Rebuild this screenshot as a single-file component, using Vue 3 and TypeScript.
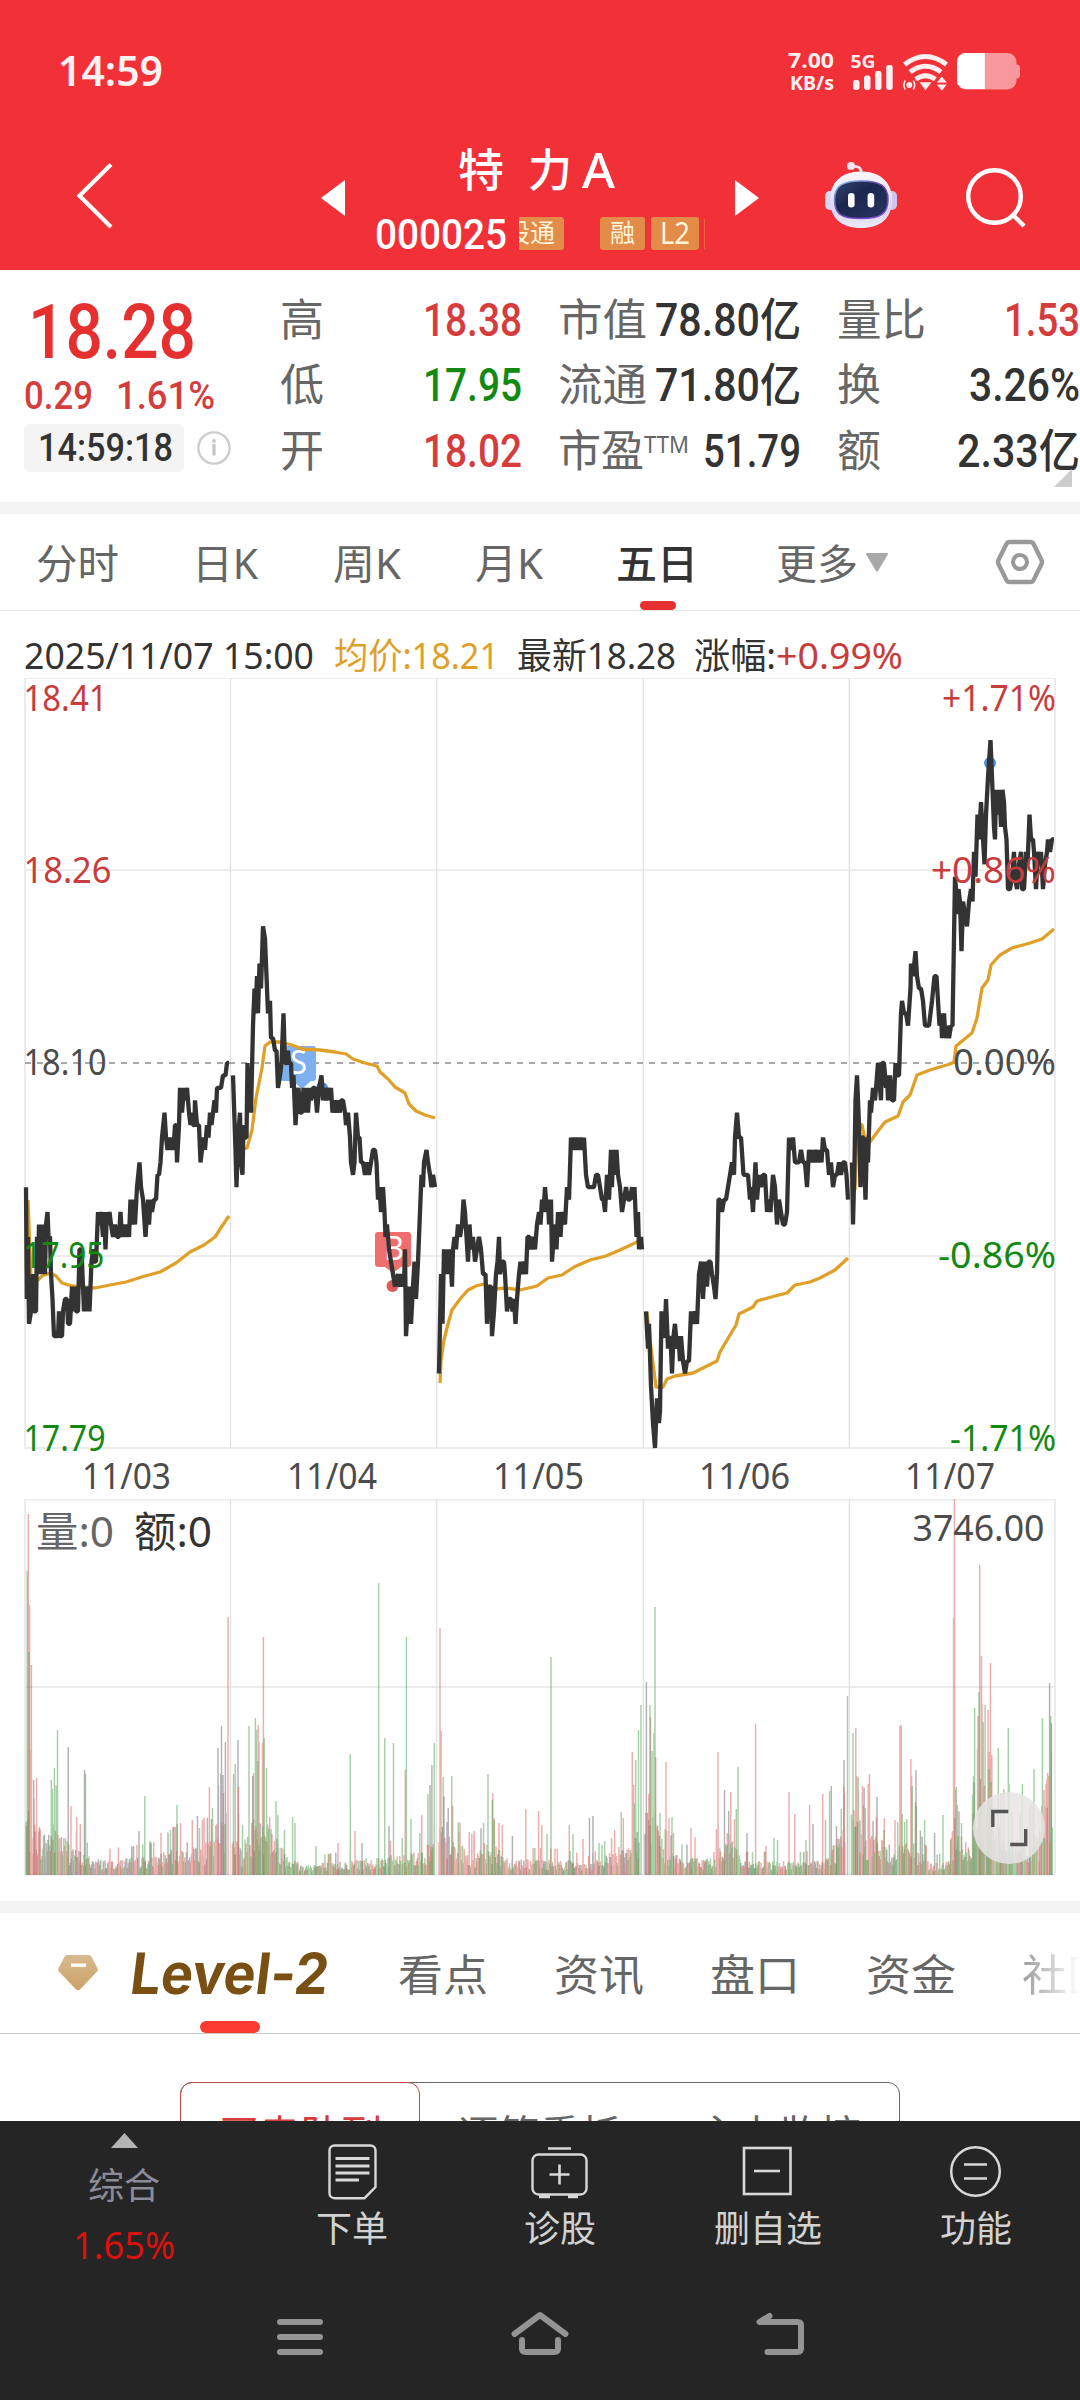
<script setup lang="ts">
import { h } from 'vue'

interface LabelProps {
  t: string
  w: number
  s: number
}

// One line of text set to an exact advance width; the bottom edge of its box is the baseline.
const Label = (p: LabelProps) =>
  h('svg', { class: 'label', width: p.w, height: p.s, style: 'display:block;overflow:visible;flex:none' }, [
    h(
      'text',
      { x: 0, y: p.s, 'font-size': p.s, fill: 'currentColor', textLength: p.w, lengthAdjust: 'spacingAndGlyphs', style: 'white-space:pre' },
      p.t,
    ),
  ])
Label.props = ['t', 'w', 's']

interface Stat {
  k: string
  kw: number
  v: string
  vw: number
  tone: string
  sup?: string
}
const stats: Stat[][] = [
  [
    { k: '高', kw: 44, v: '18.38', vw: 99, tone: 'up' },
    { k: '低', kw: 44, v: '17.95', vw: 99, tone: 'down' },
    { k: '开', kw: 44, v: '18.02', vw: 99, tone: 'up' },
  ],
  [
    { k: '市值', kw: 89, v: '78.80亿', vw: 146, tone: 'flat' },
    { k: '流通', kw: 89, v: '71.80亿', vw: 146, tone: 'flat' },
    { k: '市盈', kw: 86, v: '51.79', vw: 98, tone: 'flat', sup: 'TTM' },
  ],
  [
    { k: '量比', kw: 89, v: '1.53', vw: 76, tone: 'up' },
    { k: '换', kw: 44, v: '3.26%', vw: 111, tone: 'flat' },
    { k: '额', kw: 44, v: '2.33亿', vw: 123, tone: 'flat' },
  ],
]

const dayEdges = [230.5, 436.7, 643.3, 849.3]

const BASE = 1063
const TICK = 12.42

// Flat list of x, offset from 18.10 in cents
const sessions: number[][] = [
  [26, -10, 26.8, -19, 28, -14, 29, -21, 31, -20, 33, -17, 34, -20, 36, -20, 37, -14, 38, -17, 39, -13, 41, -17, 41.5, -13, 43, -16, 43.5, -13, 45, -17, 46, -13, 47.5, -12, 48.5, -14, 50, -14, 51, -17, 52.5, -19, 54, -22, 58, -22, 59, -20, 60, -22, 62, -22, 63, -20, 65, -19, 67, -19, 68, -21, 70, -21, 72, -18, 73.5, -20, 75, -18, 76, -20, 78, -20, 79.5, -15, 80.5, -15, 82, -16, 84, -20, 85, -18, 86.5, -20, 88, -18, 89.5, -20, 91.5, -16, 93, -15, 94, -16, 96, -16, 98, -12, 100, -13, 101, -12, 103, -14, 104, -12, 105.5, -15, 107, -12, 108.5, -13, 109.5, -12, 111, -13, 113, -14, 115, -13, 117, -14, 119, -14, 120.5, -12, 122, -14, 124, -13, 125.5, -14, 127, -13, 129, -14, 130.5, -11, 132, -13, 133, -11, 135, -13, 137, -10, 139.5, -8, 141, -10, 143, -11, 145.5, -14, 147, -12, 148, -11, 149, -13, 150.5, -11, 152, -12, 154, -11, 156, -11, 157.5, -9, 159, -9, 160.5, -8, 162, -6, 164.5, -4, 166, -6, 167.5, -7, 169, -6, 170.5, -7, 172, -6, 173.5, -7, 175, -5, 176, -5, 177, -8, 179, -5, 180, -2, 182, -4, 184, -2, 185, -3, 187, -2, 189, -4, 190.5, -5, 192, -4, 193, -5, 194.5, -5, 195, -3, 197, -5, 199, -5, 200.5, -8, 202, -7, 203.5, -6, 205, -7, 207, -5, 208.5, -6, 210, -4, 211.5, -5, 213, -4, 214.5, -3, 216, -4, 217, -2, 219, -2, 221, -2, 223, -1, 225.5, -1, 227, 0, 229, 0],
  [233, -1, 235.5, -7, 236.5, -10, 238, -6, 240, -4, 241, -8, 242.5, -9, 243.5, -5, 245, -6, 246.5, -6, 247.5, 0, 249, -4, 250.5, -1, 251, -4, 253, 3, 254.5, 6, 255.5, 4, 257, 7, 258, 4, 259.5, 8, 261, 6, 263, 11, 265, 10, 266.5, 7, 268, 4, 270, 5, 271, 2, 273, 2, 275, 1, 276.5, 1, 278, -2, 280, -1, 281.5, 0, 283.5, 4, 285, 0, 286.5, 0, 288, 1, 289, 0, 291, 0, 292, -2, 293.5, -1, 295.5, -5, 297, -3, 298.5, -2, 300, -4, 302, -4, 303.5, -2, 305, -4, 306.5, -2, 308, -4, 309.5, -2, 311, -3, 313, -2, 315, -2, 317, -4, 319, -2, 321.5, -1, 323, -3, 324, -2, 326, -3, 328, -2, 329.5, -3, 331, -2, 332.5, -4, 335, -3, 336.5, -4, 338, -3, 340, -4, 341, -3, 343, -3, 345, -4, 346, -5, 348, -4, 350, -6, 351, -8, 353, -9, 354.5, -8, 356, -4, 358, -6, 359.5, -6, 361, -8, 363, -8, 365, -9, 367, -8, 369, -9, 371, -8, 373, -7, 375, -7, 376.5, -8, 378, -11, 379.5, -10, 381, -12, 383, -10, 384.5, -12, 385.5, -14, 387, -13, 389, -15, 391, -16, 393, -17, 395, -18, 398, -17, 400, -18, 402, -17, 404, -18, 405, -15, 406, -22, 408, -19, 409.5, -18, 411, -21, 413, -18, 414.5, -16, 416, -19, 418, -16, 420, -12, 421.5, -9, 423, -10, 424, -8, 426.5, -7, 428, -8, 430, -9, 431.5, -10, 433, -9, 435, -10],
  [439, -25, 440, -21, 441, -17, 442.5, -21, 444, -15, 446, -17, 447, -15, 449, -17, 450, -15, 452, -18, 453, -15, 454.5, -14, 456, -15, 458, -13, 460, -14, 462, -13, 463.5, -11, 465, -12, 466.5, -14, 468, -16, 469.5, -13, 471, -15, 473, -14, 475, -16, 477, -15, 479, -14, 481, -15, 483, -17, 485.5, -17, 487, -21, 489, -18, 491, -18, 492, -22, 494, -20, 496, -17, 497.5, -16, 499, -14, 500, -17, 502, -16, 504, -16, 505, -17, 507, -20, 509, -19, 511, -19, 512.5, -20, 514, -19, 515.5, -21, 517, -19, 519, -17, 520.5, -16, 522, -17, 524, -16, 526, -17, 527.5, -14, 529.5, -14, 531, -15, 533, -14, 535, -15, 537, -13, 539, -12, 540.5, -13, 542, -11, 543.5, -12, 545, -10, 547, -12, 548, -11, 549, -13, 551, -11, 552, -16, 554.5, -13, 556.5, -15, 558, -12, 560.5, -14, 562, -12, 565, -13, 567, -10, 569, -11, 571, -6, 573, -7, 574, -6, 576, -7, 577, -6, 579, -7, 580.5, -6, 582, -7, 584, -6, 586, -9, 588, -10, 590, -10, 592, -10, 594, -10, 596, -9, 598, -9, 600, -10, 602, -11, 603.5, -11, 605, -12, 607, -9, 609, -11, 611, -7, 612, -10, 613, -7, 614, -9, 616.5, -7, 618, -9, 620, -10, 622, -12, 624, -11, 626, -10, 628, -11, 630, -11, 632, -10, 633.5, -11, 634.5, -10, 636.5, -14, 638, -12, 639, -15, 641, -14, 642, -15],
  [646, -20, 648, -23, 649, -21, 651, -26, 653, -29, 655, -31, 657, -27, 659, -29, 660, -28, 661.5, -20, 663, -22, 664.5, -22, 666, -19, 668, -23, 669, -22, 671, -23, 672, -25, 673.5, -22, 675, -21, 677, -23, 678.5, -22, 680, -24, 681, -22, 683, -24, 685, -25, 687, -24, 689, -24, 691, -20, 693, -21, 695, -20, 697, -21, 699, -17, 701, -16, 703, -19, 705, -16, 707, -18, 708.5, -16, 710.5, -16, 712, -17, 714, -18, 715.5, -19, 717, -17, 718.5, -11, 720, -11, 722, -12, 724, -11, 726, -11, 728, -10, 730, -9, 732, -8, 734, -9, 735, -6, 737, -4, 739, -6, 741, -6, 743.5, -9, 746, -9, 748, -9, 750, -11, 751, -10, 753, -12, 755.5, -8, 757, -11, 759, -9, 761, -10, 763, -9, 765, -9, 767, -12, 769, -11, 770.5, -12, 773, -9, 775, -10, 777, -13, 779, -11, 781, -12, 783, -13, 785, -13, 787, -12, 789, -6, 791, -7, 793, -6, 795, -8, 797, -8, 799, -8, 801, -7, 803, -8, 805, -8, 807, -10, 809, -7, 811, -8, 812, -7, 814, -8, 816, -7, 818, -8, 820, -7, 821.5, -8, 823, -6, 825, -7, 827, -7, 829, -9, 831, -8, 833, -10, 835, -9, 837, -9, 839, -8, 841, -9, 843, -8, 845, -8, 846.5, -9, 848, -11],
  [852, -8, 853, -13, 854.5, -8, 855.5, -3, 857, -1, 859, -5, 860.5, -10, 862, -6, 863.5, -6, 865.5, -11, 867, -6, 868, -8, 870, -3, 871, -4, 873, -2, 875, -3, 877, -1, 878, 0, 880, -2, 881, -3, 882, 0, 884, 0, 886, -2, 887, -1, 888, -3, 890, -1, 892, -3, 894, -3, 895.5, 0, 897, -1, 899, -1, 901, 4, 902, 5, 904, 4, 906, 4, 908, 3, 910.5, 6, 911, 8, 913, 7, 915.5, 9, 917, 7, 919, 6, 921, 6, 923, 5, 925, 3, 927, 3, 929, 3, 930.5, 4, 932, 5, 934.5, 7, 936.5, 7, 938, 5, 939.5, 3, 941, 4, 942, 2, 944, 4, 945.5, 2, 947, 3, 949, 2, 951, 3, 952.5, 3, 954, 10, 955, 15, 956, 14, 957.5, 12, 958.5, 14, 960, 13, 961.5, 9, 963, 13, 965, 12, 967, 11, 969, 13, 971, 14, 972.5, 13, 974, 17, 975.5, 15, 977.5, 20, 979, 18, 981, 21, 983, 18, 984.5, 16, 986, 20, 988, 23, 990.5, 26, 992, 23, 994, 19, 995, 18, 996, 22, 998, 20, 999.5, 22, 1001, 19, 1002.5, 22, 1004, 21, 1005, 19, 1006.5, 18, 1008, 14, 1010, 14, 1012, 15, 1014, 17, 1015, 15, 1017, 14, 1019, 16, 1021, 17, 1022, 14, 1024, 14, 1026, 17, 1027.5, 16, 1029.5, 20, 1031, 18, 1033, 18, 1034, 17, 1036, 14, 1038, 17, 1040, 16, 1041, 17, 1043, 14, 1045, 16, 1047, 17, 1048, 18, 1050, 17, 1052, 18, 1054, 18],
]
const pricePaths = sessions.map((s) => {
  const pts: string[] = []
  for (let i = 0; i < s.length; i += 2) pts.push(`${s[i]},${(BASE - s[i + 1] * TICK).toFixed(1)}`)
  return pts.join(' ')
})

const averages: string[] = [
  '28,1200 31,1279 38,1280 42,1276 50,1273 56,1276 62,1283 72,1286 83,1287 95,1288 110,1285 126,1282 145,1276 160,1272 176,1263 190,1252 204,1245 215,1237 222,1226 229,1216',
  '238,1130 240,1150 247,1148 252,1130 256,1098 262,1068 265,1046 270,1042 280,1042 292,1045 302,1049 320,1050 335,1052 346,1054 353,1059 365,1063 377,1066 380,1072 388,1079 395,1087 405,1093 409,1104 416,1111 425,1115 435,1118',
  '440,1383 441,1360 444,1340 448,1324 452,1310 460,1299 468,1290 476,1286 484,1284 495,1289 506,1288 520,1290 537,1286 548,1278 562,1275 574,1267 590,1260 606,1256 620,1250 635,1243 641,1239',
  '647,1312 650,1340 656,1387 663,1387 667,1379 675,1376 693,1373 705,1367 717,1361 720,1352 730,1335 736,1325 739,1314 753,1307 757,1301 775,1296 787,1293 795,1285 810,1282 820,1278 835,1270 848,1258',
  '855,1190 857,1125 862,1125 864,1135 870,1142 875,1135 885,1122 898,1116 903,1102 910,1095 917,1075 930,1070 950,1064 954,1062 956,1046 972,1033 977,1018 982,988 988,980 991,965 1000,955 1012,948 1030,943 1042,939 1054,929',
]

interface Mark {
  t: string
  x: number
  y: number
  w: number
  c: string
}
const marks: Mark[] = [
  { t: '18.41', x: 23.5, y: 710.5, w: 84, c: '#c83c3c' },
  { t: '18.26', x: 23.5, y: 882.5, w: 88, c: '#c83c3c' },
  { t: '18.10', x: 23.5, y: 1075, w: 83, c: '#4c4c4c' },
  { t: '17.95', x: 23.5, y: 1268, w: 81, c: '#128a12' },
  { t: '17.79', x: 23.5, y: 1451, w: 82, c: '#128a12' },
  { t: '+1.71%', x: 942, y: 710.5, w: 114, c: '#c83c3c' },
  { t: '+0.86%', x: 931, y: 882.5, w: 125, c: '#c83c3c' },
  { t: '0.00%', x: 953, y: 1075, w: 103, c: '#4c4c4c' },
  { t: '-0.86%', x: 938, y: 1268, w: 118, c: '#128a12' },
  { t: '-1.71%', x: 950, y: 1451, w: 106, c: '#128a12' },
  { t: '11/03', x: 82, y: 1488.5, w: 89, c: '#4c4c4c' },
  { t: '11/04', x: 287, y: 1488.5, w: 90, c: '#4c4c4c' },
  { t: '11/05', x: 493, y: 1488.5, w: 91, c: '#4c4c4c' },
  { t: '11/06', x: 699, y: 1488.5, w: 91, c: '#4c4c4c' },
  { t: '11/07', x: 905, y: 1488.5, w: 90, c: '#4c4c4c' },
]

// Volume: notable minutes as x, top edge, direction
type Spike = [number, number, string]
const spikes: Spike[] = [
  [27.2, 1571, 'g'], [28.3, 1514, 'r'], [29.6, 1605, 'r'], [29, 1652, 'g'], [31.4, 1665, 'r'], [30.4, 1750, 'r'], [36.5, 1778, 'r'], [34, 1799, 'n'], [51.3, 1780, 'g'], [52.4, 1789, 'g'], [54.4, 1768, 'g'], [57.5, 1730, 'g'], [68.2, 1747, 'n'], [71, 1806, 'r'], [76.8, 1817, 'r'], [80.3, 1824, 'r'], [84.5, 1770, 'n'], [85.5, 1774, 'g'], [139, 1831, 'n'], [144.8, 1796, 'g'], [150, 1841, 'g'], [161, 1833, 'r'], [170.5, 1830, 'g'], [175.3, 1827, 'r'], [176.9, 1805, 'g'], [180.5, 1823, 'r'], [197.5, 1816, 'n'], [199.5, 1828, 'g'], [209.4, 1787, 'r'], [211.5, 1819, 'n'], [218, 1748, 'n'], [220.8, 1774, 'n'], [221.5, 1726, 'n'], [223, 1775, 'n'], [225.4, 1742, 'n'], [223.5, 1793, 'r'], [228, 1617, 'r'],
  [233.5, 1774, 'g'], [235.3, 1764, 'g'], [238, 1740, 'n'], [238.5, 1787, 'r'], [242.5, 1825, 'g'], [249, 1726, 'g'], [253.5, 1773, 'r'], [255.4, 1718, 'g'], [256.5, 1730, 'g'], [258.2, 1725, 'r'], [259, 1742, 'r'], [263.4, 1637, 'r'], [262.5, 1743, 'r'], [264.2, 1738, 'g'], [266.5, 1768, 'g'], [269.7, 1817, 'r'], [276, 1801, 'g'], [284.5, 1830, 'g'], [292.6, 1817, 'g'], [295, 1823, 'g'], [316, 1846, 'g'], [338, 1843, 'r'], [350.3, 1754, 'g'], [355, 1831, 'r'], [362, 1843, 'n'], [378.7, 1583, 'g'], [384.7, 1738, 'g'], [389, 1826, 'n'], [393.5, 1743, 'g'], [405.2, 1770, 'r'], [406.4, 1637, 'g'], [411, 1819, 'g'], [421.7, 1815, 'r'], [428, 1794, 'g'], [430, 1785, 'n'], [431.9, 1765, 'n'], [434.3, 1743, 'g'],
  [440, 1628, 'r'], [441, 1731, 'r'], [443.2, 1777, 'g'], [451.8, 1776, 'g'], [452.6, 1806, 'r'], [447, 1822, 'n'], [459.3, 1832, 'r'], [474, 1831, 'r'], [488, 1774, 'g'], [492.8, 1793, 'r'], [492.3, 1800, 'g'], [494, 1818, 'r'], [499, 1823, 'r'], [502.3, 1825, 'r'], [512.4, 1836, 'n'], [525.8, 1809, 'r'], [538.6, 1811, 'r'], [541.7, 1825, 'r'], [551, 1657, 'g'], [547, 1834, 'g'], [569.3, 1825, 'r'], [573, 1834, 'g'], [583, 1839, 'r'], [589.5, 1818, 'n'], [593, 1816, 'n'], [599, 1843, 'g'], [604.7, 1841, 'g'], [611.6, 1838, 'r'], [621.2, 1812, 'g'], [623.3, 1818, 'r'], [632.3, 1752, 'r'], [633.6, 1785, 'r'], [635.7, 1760, 'g'], [638.5, 1730, 'g'], [641, 1705, 'g'],
  [646.4, 1682, 'n'], [650, 1705, 'g'], [650.5, 1717, 'r'], [648.8, 1794, 'r'], [652, 1751, 'g'], [654, 1733, 'g'], [655, 1607, 'g'], [655.7, 1757, 'r'], [660, 1813, 'g'], [666, 1762, 'r'], [669, 1818, 'r'], [672, 1817, 'g'], [673.5, 1833, 'r'], [691, 1828, 'r'], [695, 1837, 'r'], [718, 1752, 'r'], [724.5, 1790, 'n'], [728.7, 1811, 'n'], [730.8, 1792, 'r'], [734.5, 1819, 'r'], [736.3, 1809, 'g'], [738, 1767, 'g'], [747, 1833, 'n'], [755.6, 1724, 'r'], [766, 1846, 'r'], [774, 1838, 'g'], [777.6, 1840, 'g'], [789, 1792, 'r'], [794.8, 1814, 'r'], [809.6, 1805, 'r'], [813, 1824, 'n'], [806, 1840, 'g'], [822.7, 1794, 'r'], [825.5, 1820, 'g'], [829.6, 1791, 'g'], [831.3, 1786, 'n'], [841.3, 1809, 'g'], [843.7, 1787, 'r'], [844, 1760, 'n'], [847.5, 1696, 'g'], [836.5, 1826, 'n'],
  [853, 1733, 'g'], [855.8, 1728, 'r'], [856.8, 1776, 'r'], [858.5, 1790, 'g'], [862.3, 1792, 'r'], [863.3, 1805, 'r'], [865.4, 1808, 'g'], [868.2, 1784, 'r'], [869.5, 1774, 'r'], [873, 1821, 'n'], [877, 1797, 'n'], [876.4, 1817, 'r'], [884, 1830, 'g'], [895, 1820, 'r'], [899.9, 1726, 'r'], [901.2, 1725, 'r'], [902.3, 1814, 'g'], [904.7, 1822, 'g'], [910.9, 1759, 'r'], [911.6, 1776, 'r'], [912.2, 1786, 'g'], [916, 1770, 'n'], [915.4, 1802, 'r'], [916.4, 1806, 'g'], [924.6, 1820, 'g'], [934.6, 1833, 'n'], [943, 1815, 'g'], [951, 1838, 'r'], [953.6, 1618, 'r'], [954.4, 1499, 'r'], [955.3, 1790, 'r'], [956.3, 1787, 'g'], [957.4, 1805, 'r'], [961.5, 1823, 'g'], [973, 1813, 'r'], [974.6, 1708, 'g'], [973.5, 1776, 'g'], [978, 1716, 'r'], [979, 1692, 'g'], [979.7, 1565, 'r'], [981.5, 1656, 'r'], [980.4, 1779, 'n'], [982, 1704, 'r'], [983.2, 1722, 'g'], [988, 1710, 'r'], [989.4, 1752, 'r'], [990.4, 1663, 'r'], [989, 1769, 'g'], [991, 1782, 'g'], [998.3, 1748, 'g'], [1001, 1793, 'r'], [1003.8, 1789, 'g'], [1008.3, 1728, 'g'], [1009, 1784, 'g'], [1022.4, 1784, 'g'], [1030, 1806, 'r'], [1034, 1769, 'g'], [1042.4, 1718, 'g'], [1041.7, 1806, 'g'], [1044, 1790, 'r'], [1046, 1784, 'r'], [1047, 1779, 'r'], [1047.6, 1773, 'r'], [1048.6, 1776, 'r'], [1049.6, 1683, 'n'], [1050.7, 1716, 'g'], [1051.3, 1753, 'g'],
]

// Typical bar height along each day, as x, height; the dominant tone follows
const envelopes: { pts: number[]; mix: string }[] = [
  { pts: [26, 60, 34, 50, 45, 35, 55, 50, 62, 35, 80, 20, 100, 13, 130, 15, 160, 18, 180, 28, 210, 30, 226, 65], mix: 'rgnrn' },
  { pts: [232.5, 50, 242, 22, 256, 62, 265, 55, 280, 28, 300, 9, 340, 12, 380, 16, 420, 22, 434, 30], mix: 'rggnr' },
  { pts: [439, 50, 450, 32, 475, 20, 490, 32, 510, 14, 560, 14, 590, 10, 610, 20, 639, 40], mix: 'rgrnr' },
  { pts: [645, 65, 655, 60, 664, 25, 680, 16, 710, 14, 728, 42, 742, 12, 790, 12, 825, 13, 845, 45], mix: 'rgnrg' },
  { pts: [851.5, 60, 870, 38, 890, 26, 915, 30, 930, 10, 948, 12, 957, 35, 970, 30, 984, 95, 995, 50, 1015, 30, 1040, 40, 1053, 85], mix: 'rgrng' },
]
let seed = 7
const rnd = () => {
  seed = (seed * 1103515245 + 12345) % 2147483648
  return seed / 2147483648
}
const minuteBars: Spike[] = []
for (const { pts, mix } of envelopes) {
  let k = 0
  for (let x = pts[0]; x <= pts[pts.length - 2]; x += 0.84) {
    while (k < pts.length - 4 && x > pts[k + 2]) k += 2
    const f = (x - pts[k]) / (pts[k + 2] - pts[k])
    const env = pts[k + 1] + (pts[k + 3] - pts[k + 1]) * f
    const r = rnd()
    const height = Math.max(2, env * (0.35 + r * 0.9 + (r > 0.9 ? 0.7 : 0)))
    minuteBars.push([x, 1875 - height, mix[Math.floor(rnd() * mix.length)]])
  }
}
const bars = [...minuteBars, ...spikes]
const barPath = (tone: string) =>
  bars
    .filter((b) => b[2] === tone)
    .map((b) => `M${b[0].toFixed(1)} 1875V${b[1].toFixed(1)}`)
    .join('')
const volume = [
  { d: barPath('n'), c: '#6f6a72' },
  { d: barPath('r'), c: '#dd625e' },
  { d: barPath('g'), c: '#55a552' },
]

const periods = [
  { t: '分时', w: 83 },
  { t: '日K', w: 66 },
  { t: '周K', w: 68 },
  { t: '月K', w: 68 },
]
</script>

<template>
  <div class="screen">
    <header class="top">
      <div class="status">
        <div class="clock"><Label t="14:59" :w="105" :s="42" /></div>
        <div class="speed">
          <Label t="7.00" :w="46" :s="21" />
          <Label t="KB/s" :w="44" :s="20" />
        </div>
        <svg class="signals" width="180" height="44" viewBox="845 50 180 44">
          <text x="850.5" y="68" font-size="18" font-weight="700" fill="#fff" fill-opacity=".93" textLength="25" lengthAdjust="spacingAndGlyphs">5G</text>
          <g fill="#fff" fill-opacity=".93">
            <rect x="853" y="80" width="6.5" height="10" rx="2.4" />
            <rect x="864" y="75.5" width="6.5" height="14.5" rx="2.4" />
            <rect x="875" y="71" width="6.5" height="19" rx="2.4" />
            <rect x="886.2" y="65" width="6.5" height="25" rx="2.4" />
            <path d="M919.5 82.2h12l-6 8z" />
            <path d="M936.8 82.6h10l-5-6.2zM936.8 84.6h10l-5 6.2z" />
            <circle cx="909.3" cy="85" r="2.9" />
          </g>
          <g fill="none" stroke="#fff" stroke-opacity=".93">
            <g stroke-width="4.9">
              <path d="M904.5 64.5Q925.5 48.5 946.5 64.5" />
              <path d="M910 72Q925.5 60.5 941 72" />
              <path d="M915.7 79.2Q925.5 72.5 935.3 79.2" />
            </g>
            <path stroke-width="1.6" d="M905.3 80.5Q902.5 85 905.3 89.5M913.3 80.5Q916.1 85 913.3 89.5" />
          </g>
          <path d="M965.5 53h42a9 9 0 0 1 9 9v2.5a3.5 3.5 0 0 1 3.5 3.5v7a3.5 3.5 0 0 1-3.5 3.5v2a9 9 0 0 1-9 9h-42a8.5 8.5 0 0 1-8.5-8.5v-19.5a8.5 8.5 0 0 1 8.5-8.5z" fill="#f9989c" />
          <path d="M984.8 53h-19.3a8.5 8.5 0 0 0-8.5 8.5v19a8.5 8.5 0 0 0 8.5 8.5h19.3z" fill="#fff" />
        </svg>
      </div>
      <div class="titlebar">
        <svg class="back" width="40" height="70" viewBox="75 160 40 70">
          <path d="M111 164.5L79.5 195.8 111 227" fill="none" stroke="#fff" stroke-width="4.2" />
        </svg>
        <svg class="prev" width="24" height="36" viewBox="0 0 24 36"><path d="M24 0v36L0 18z" fill="#fff" /></svg>
        <div class="stock">
          <div class="name">
            <Label t="特" :w="46" :s="45" />
            <Label t="力" :w="44" :s="45" />
            <Label t="A" :w="33" :s="49" />
          </div>
          <div class="codeline">
            <div class="code"><Label t="000025" :w="132" :s="42" /></div>
            <div class="tags">
              <span class="tag cut"><Label t="股通" :w="50" :s="25" /></span>
              <span class="tag rong"><Label t="融" :w="25" :s="25" /></span>
              <span class="tag l2"><Label t="L2" :w="30" :s="30" /></span>
              <span class="sliver"></span>
            </div>
          </div>
        </div>
        <svg class="next" width="24" height="36" viewBox="0 0 24 36"><path d="M0 0v36l24-18z" fill="#fff" /></svg>
        <svg class="robot" width="74" height="70" viewBox="824 160 74 70">
          <defs>
            <linearGradient id="shell" x1="0" y1="0" x2="0" y2="1">
              <stop offset="0" stop-color="#fdf8fb" />
              <stop offset=".7" stop-color="#dcd6f0" />
              <stop offset="1" stop-color="#eceaf8" />
            </linearGradient>
            <linearGradient id="rim" x1="0" y1="0" x2="1" y2="1">
              <stop offset="0" stop-color="#7fd4ee" />
              <stop offset=".5" stop-color="#6a3fb0" />
              <stop offset="1" stop-color="#8a52e8" />
            </linearGradient>
            <linearGradient id="glass" x1="0" y1="0" x2="1" y2="1">
              <stop offset="0" stop-color="#35436a" />
              <stop offset=".4" stop-color="#1c2750" />
              <stop offset="1" stop-color="#2a3560" />
            </linearGradient>
          </defs>
          <rect x="825" y="191" width="12" height="19" rx="5" fill="#d9d6ee" />
          <rect x="885" y="191" width="12" height="19" rx="5" fill="#cfc5ec" />
          <path d="M852 166.5Q861.5 165 861.5 174" fill="none" stroke="#f6dfe8" stroke-width="2.8" />
          <circle cx="851" cy="166" r="4" fill="#f1e4f0" />
          <path d="M861 171.5C882 171.5 892 184 892 199.5 892 219 880 228 861 228S830 219 830 199.5C830 184 840 171.5 861 171.5z" fill="url(#shell)" />
          <path d="M861 181C880 181 888 186 888 199.5 888 213 882 218.5 861 218.5S834.5 213 834.5 199.5C834.5 186 842 181 861 181z" fill="url(#glass)" stroke="url(#rim)" stroke-width="1.5" />
          <rect x="848" y="193" width="6.6" height="14.5" rx="3.3" fill="#fff" />
          <rect x="867.6" y="193" width="6.6" height="14.5" rx="3.3" fill="#fff" />
        </svg>
        <svg class="search" width="64" height="64" viewBox="964 165 64 64">
          <circle cx="994.5" cy="196.5" r="26.3" fill="none" stroke="#fff" stroke-width="4.4" />
          <path d="M1013.5 215.5l10.5 10.5" stroke="#fff" stroke-width="4.4" />
        </svg>
      </div>
    </header>

    <section class="quote">
      <div class="last">
        <div class="price din"><Label t="18.28" :w="168" :s="76" /></div>
        <div class="delta din">
          <Label t="0.29" :w="69" :s="39" />
          <Label t="1.61%" :w="99" :s="39" />
        </div>
        <div class="stamp">
          <div class="pill din"><Label t="14:59:18" :w="135" :s="39" /></div>
          <svg width="36" height="36" viewBox="0 0 36 36">
            <circle cx="18" cy="18" r="15.6" fill="none" stroke="#ccc" stroke-width="2.4" />
            <path d="M16.3 15.5h1.7v10" fill="none" stroke="#c4c4c4" stroke-width="3.2" />
            <circle cx="18" cy="11" r="1.9" fill="#c4c4c4" />
          </svg>
        </div>
      </div>
      <div v-for="(col, i) in stats" :key="i" class="stats" :class="'c' + i">
        <div v-for="s in col" :key="s.k" class="stat">
          <Label :t="s.k" :w="s.kw" :s="44" />
          <span v-if="s.sup" class="sup"><Label :t="s.sup" :w="45" :s="23" /></span>
          <span class="v din" :class="s.tone"><Label :t="s.v" :w="s.vw" :s="46" /></span>
        </div>
      </div>
      <svg class="corner" width="18" height="18" viewBox="0 0 18 18"><path d="M18 0v18H0z" fill="#ccc" /></svg>
    </section>

    <nav class="periods">
      <div v-for="p in periods" :key="p.t" class="period"><Label :t="p.t" :w="p.w" :s="41" /></div>
      <div class="period on"><Label t="五日" :w="82" :s="41" /></div>
      <div class="period more">
        <Label t="更多" :w="82" :s="41" />
        <svg width="22" height="19" viewBox="0 0 22 19"><path d="M1 0h20a1 1 0 0 1 .8 1.5L12 18a1.2 1.2 0 0 1-2 0L.2 1.5A1 1 0 0 1 1 0z" fill="#a8a8a8" /></svg>
      </div>
      <svg class="gear" width="50" height="48" viewBox="995 538 50 48">
        <path d="M1009.5 542h21q2 0 3 1.8l8 16.2q1 2 0 4l-8 16.2q-1 1.8-3 1.8h-21q-2 0-3-1.8l-8-16.2q-1-2 0-4l8-16.2q1-1.8 3-1.8z" fill="none" stroke="#999" stroke-width="4.4" />
        <circle cx="1020" cy="562" r="7" fill="none" stroke="#999" stroke-width="4.2" />
      </svg>
    </nav>

    <section class="chart">
      <div class="legend">
        <Label t="2025/11/07 15:00" :w="290" :s="36" />
        <Label class="avg" t="均价:18.21" :w="165" :s="36" />
        <Label t="最新18.28" :w="159" :s="36" />
        <Label t="涨幅:" :w="82" :s="36" />
        <Label class="rise" t="+0.99%" :w="127" :s="36" />
      </div>
      <svg class="price-plot" width="1080" height="821" viewBox="0 678 1080 821">
        <g stroke="#ececec" stroke-width="2" fill="none">
          <rect x="25" y="678" width="1030" height="770" />
          <path d="M25 870H1055M25 1256H1055" />
        </g>
        <path v-for="x in dayEdges" :key="x" :d="`M${x} 678V1448`" stroke="#e0e0e0" stroke-width="1.2" />
        <path d="M25 1063H1055" stroke="#8c8c8c" stroke-width="1.6" stroke-dasharray="6 6" />
        <path d="M283 1046h30a3 3 0 0 1 3 3v29a3 3 0 0 1-3 3h-2l-9 8-9-8h-10a3 3 0 0 1-3-3v-29a3 3 0 0 1 3-3z" fill="#7db0ef" />
        <g fill="#5590d8">
          <circle cx="302.5" cy="1098" r="6" />
          <circle cx="322" cy="1088" r="6" />
          <circle cx="990" cy="763" r="6" />
        </g>
        <path d="M378 1232h30a3 3 0 0 1 3 3v29a3 3 0 0 1-3 3h-7l-8 6-8-6h-7a3 3 0 0 1-3-3v-29a3 3 0 0 1 3-3z" fill="#f06e6e" />
        <circle cx="392.5" cy="1286" r="6" fill="#dd5a5a" />
        <text x="290" y="1074" font-size="32" fill="#fff" textLength="17" lengthAdjust="spacingAndGlyphs">S</text>
        <text x="384" y="1260" font-size="32" fill="#fff" textLength="20" lengthAdjust="spacingAndGlyphs">B</text>
        <polyline v-for="(a, i) in averages" :key="'a' + i" :points="a" fill="none" stroke="#e0a028" stroke-width="3.3" stroke-linejoin="round" />
        <polyline v-for="(p, i) in pricePaths" :key="'p' + i" :points="p" fill="none" stroke="#333" stroke-width="4.3" stroke-linejoin="bevel" />
        <text v-for="m in marks" :key="m.t" :x="m.x" :y="m.y" :fill="m.c" font-size="36" :textLength="m.w" lengthAdjust="spacingAndGlyphs">{{ m.t }}</text>
      </svg>
      <div class="volume">
        <svg width="1080" height="402" viewBox="0 1499 1080 402">
          <g stroke="#ececec" stroke-width="2" fill="none">
            <rect x="25" y="1499.5" width="1030" height="375" />
            <path d="M25 1687H1055" />
          </g>
          <path v-for="x in dayEdges" :key="x" :d="`M${x} 1499V1875`" stroke="#e0e0e0" stroke-width="1.2" />
          <path v-for="v in volume" :key="v.c" :d="v.d" :stroke="v.c" stroke-width="1.45" stroke-opacity=".52" fill="none" />
          <text x="36" y="1546.5" font-size="42" fill="#666" textLength="78" lengthAdjust="spacingAndGlyphs">量:0</text>
          <text x="134" y="1546.5" font-size="42" fill="#333" textLength="78" lengthAdjust="spacingAndGlyphs">额:0</text>
          <text x="912.5" y="1540.5" font-size="36" fill="#4c4c4c" textLength="132" lengthAdjust="spacingAndGlyphs">3746.00</text>
        </svg>
        <svg class="expand" width="72" height="72" viewBox="973 1793 72 72">
          <circle cx="1009" cy="1829" r="36" fill="#e6e4e4" fill-opacity=".86" />
          <path d="M992.8 1828v-15.5h15.5M1025.7 1830v15.5h-15.5" fill="none" stroke="#555" stroke-width="3.4" />
        </svg>
      </div>
    </section>

    <nav class="sections">
      <svg class="gem" width="48" height="48" viewBox="54 1950 48 48">
        <defs>
          <linearGradient id="gold" x1="0" y1="0" x2="0" y2="1">
            <stop offset="0" stop-color="#d8ba90" />
            <stop offset="1" stop-color="#cba168" />
          </linearGradient>
        </defs>
        <path d="M67.5 1955h21q2 0 3 1.7l6 11.5q1 2-.6 3.6l-16.500 17.2q-2.400 2.400-4.800 0l-16.500-17.2q-1.600-1.600-.6-3.600l6-11.500q1-1.700 3-1.700z" fill="url(#gold)" />
        <rect x="71" y="1963.5" width="15" height="3.4" fill="#fff" />
      </svg>
      <div class="level"><Label t="Level-2" :w="198" :s="57" /></div>
      <Label t="看点" :w="90" :s="43.5" />
      <Label t="资讯" :w="90" :s="43.5" />
      <Label t="盘口" :w="90" :s="43.5" />
      <Label t="资金" :w="90" :s="43.5" />
      <div class="fade"><Label t="社区" :w="90" :s="43.5" /></div>
    </nav>

    <section class="queue">
      <div class="segmented">
        <div class="seg on"><Label t="买卖队列" :w="164" :s="40" /></div>
        <div class="seg"><Label t="逐笔委托" :w="164" :s="40" /></div>
        <div class="seg"><Label t="主力监控" :w="164" :s="40" /></div>
      </div>
    </section>

    <footer class="dock">
      <div class="actions">
        <div class="index">
          <svg width="27" height="15" viewBox="0 0 27 15"><path d="M13.5 0L27 15H0z" fill="#b4b4b4" /></svg>
          <Label t="综合" :w="72" :s="36" />
          <Label t="1.65%" :w="102" :s="39" />
        </div>
        <div class="action">
          <svg width="60" height="60" viewBox="322 2142 60 60" fill="none" stroke="#d8d8d8" stroke-width="2.4">
            <path d="M334.5 2145.5h36a5 5 0 0 1 5 5v36.5l-11 11.2h-30a5 5 0 0 1-5-5v-42.7a5 5 0 0 1 5-5z" />
            <path d="M335.5 2158.5h34M335.5 2166h34M335.5 2173h34M335.5 2180h23.5" stroke-width="2.8" />
          </svg>
          <Label t="下单" :w="72" :s="36" />
        </div>
        <div class="action">
          <svg width="60" height="60" viewBox="530 2142 60 60" fill="none" stroke="#d8d8d8" stroke-width="2.4">
            <rect x="532.5" y="2154.5" width="54" height="40" rx="6" />
            <path d="M548 2148.5h23M559.5 2164.5v20M549.5 2174.5h20" stroke-width="2.6" />
            <path d="M539 2196.5h11M568 2196.5h10" stroke-width="3.6" />
          </svg>
          <Label t="诊股" :w="72" :s="36" />
        </div>
        <div class="action">
          <svg width="60" height="60" viewBox="738 2142 60 60" fill="none" stroke="#d8d8d8" stroke-width="2.6">
            <rect x="744" y="2148" width="46.5" height="46" />
            <path d="M754 2171h26" />
          </svg>
          <Label t="删自选" :w="108" :s="36" />
        </div>
        <div class="action">
          <svg width="60" height="60" viewBox="946 2142 60 60" fill="none" stroke="#d8d8d8" stroke-width="2.5">
            <circle cx="975.5" cy="2171.5" r="24.3" />
            <path d="M964 2164.5h23M964 2178.5h23" />
          </svg>
          <Label t="功能" :w="72" :s="36" />
        </div>
      </div>
      <div class="system">
        <svg width="60" height="50" viewBox="270 2312 60 50"><path d="M280 2322h40M280 2337h40M280 2352h40" stroke="#949494" stroke-width="6" stroke-linecap="round" /></svg>
        <svg width="60" height="50" viewBox="510 2310 60 50">
          <path d="M514.5 2334L540 2315l25.5 19M522 2340v8.5q0 3.5 3.5 3.5h29q3.5 0 3.5-3.5v-8.5" fill="none" stroke="#949494" stroke-width="6" stroke-linecap="round" stroke-linejoin="round" />
        </svg>
        <svg width="60" height="50" viewBox="750 2310 60 50">
          <path d="M769.5 2316l-10 6h38q3.5 0 3.5 3.5v23q0 3.5-3.5 3.5h-30" fill="none" stroke="#949494" stroke-width="6" stroke-linecap="round" stroke-linejoin="round" />
        </svg>
      </div>
    </footer>
  </div>
</template>

<style>
body {
  background: #fff;
}
</style>

<style scoped>
.screen {
  width: 1080px;
  height: 2400px;
  overflow: hidden;
  background: #fff;
  color: #333;
  font-family: 'Noto Sans', 'Noto Sans CJK SC', sans-serif;
  display: flex;
  flex-direction: column;
}
.screen svg {
  display: block;
  flex: none;
}
.din {
  font-family: Roboto, 'Noto Sans CJK SC', sans-serif;
  font-weight: 500;
}
.top {
  height: 270px;
  background: #f23038;
  color: #fff;
}
.status {
  height: 130px;
  display: flex;
  padding-left: 58px;
  box-sizing: border-box;
  color: #fff1f1;
}
.clock {
  margin-top: 44px;
  width: 730px;
  font-weight: 600;
}
.speed {
  width: 57px;
  margin-top: 47px;
  font-weight: 700;
}
.speed > :last-child {
  margin: 2px 0 0 2px;
}
.signals {
  margin-top: 50px;
}
.titlebar {
  height: 140px;
  display: flex;
  align-items: flex-start;
}
.back {
  margin: 30px 0 0 75px;
}
.prev {
  margin: 50px 0 0 206px;
}
.stock {
  width: 390px;
  font-weight: 500;
}
.name {
  height: 58px;
  display: flex;
  align-items: flex-end;
  padding-left: 113px;
}
.name > :nth-child(2) {
  margin-left: 24px;
}
.name > :nth-child(3) {
  margin-left: 10px;
}
.name > :nth-child(-n + 2) {
  margin-bottom: 1px;
}
.codeline {
  display: flex;
  padding-left: 30px;
}
.code {
  width: 144px;
  margin-top: 19px;
  font-family: Roboto, sans-serif;
}
.tags {
  width: 186px;
  height: 33px;
  margin-top: 29px;
  display: flex;
  overflow: hidden;
  color: #fff4d8;
  font-weight: 400;
}
.tag {
  height: 33px;
  box-sizing: border-box;
  background: #e38b48;
  border-radius: 3px;
  flex: none;
}
.cut {
  width: 45px;
  border-radius: 0 3px 3px 0;
  overflow: hidden;
  display: flex;
  justify-content: flex-end;
  padding-right: 9px;
}
.rong {
  width: 45px;
  margin-left: 35.5px;
  padding-left: 10px;
}
.l2 {
  width: 48px;
  margin-left: 6px;
  padding-left: 9px;
}
.l2 > svg {
  margin-top: -3px;
}
.sliver {
  width: 1px;
  height: 30px;
  margin: 2px 0 0 5px;
  background: #e0663f;
}
.next {
  margin: 50px 0 0 0;
}
.robot {
  margin: 30px 0 0 65px;
}
.search {
  margin: 35px 0 0 66px;
}
.quote {
  height: 232px;
  border-bottom: 12px solid #f4f4f4;
  display: flex;
  position: relative;
}
.last {
  width: 280px;
}
.price {
  margin: 12px 0 0 28px;
  color: #e63030;
}
.delta {
  display: flex;
  gap: 23px;
  margin: 12px 0 0 24px;
  color: #d63c3c;
}
.stamp {
  display: flex;
  align-items: center;
  gap: 12px;
  margin: 15px 0 0 24px;
}
.pill {
  width: 160px;
  height: 48px;
  box-sizing: border-box;
  padding-left: 14px;
  border-radius: 6px;
  background: #f4f4f4;
}
.pill > svg {
  margin-top: -2px;
}
.stats {
  width: 243px;
  padding-top: 20px;
}
.stats.c1 {
  margin-left: 36px;
}
.stats.c2 {
  margin-left: 36px;
}
.stat {
  height: 46px;
  display: flex;
  align-items: flex-end;
  margin-bottom: 19.3px;
  color: #666;
}
.stat .v {
  margin-left: auto;
}
.sup {
  align-self: flex-start;
  margin-top: 9px;
}
.up {
  color: #d63c3c;
}
.down {
  color: #128a12;
}
.flat {
  color: #333;
}
.corner {
  position: absolute;
  left: 1054px;
  top: 199px;
}
.periods {
  height: 96px;
  border-bottom: 1.5px solid #e6e6e6;
  display: flex;
  color: #666;
  padding-left: 36px;
  box-sizing: content-box;
}
.period {
  padding-top: 24px;
  display: flex;
}
.period:nth-child(2) {
  margin-left: 73px;
}
.period:nth-child(3) {
  margin-left: 75px;
}
.period:nth-child(4) {
  margin-left: 74px;
}
.period.on {
  margin-left: 73px;
  color: #333;
  font-weight: 500;
  position: relative;
}
.period.on::after {
  content: '';
  position: absolute;
  left: 24px;
  bottom: 0;
  width: 36px;
  height: 9px;
  border-radius: 5px;
  background: #e63030;
}
.more {
  margin-left: 78px;
}
.more > :last-child {
  margin: 15px 0 0 8px;
}
.gear {
  margin: 24px 0 0 107px;
}
.legend {
  height: 66.5px;
  box-sizing: border-box;
  display: flex;
  align-items: flex-end;
  padding: 0 0 9px 24px;
}
.legend > :nth-child(2) {
  margin-left: 20px;
  color: #e0a028;
}
.legend > :nth-child(3) {
  margin-left: 18px;
}
.legend > :nth-child(4) {
  margin-left: 18px;
}
.legend > :nth-child(5) {
  color: #c83c3c;
}
.volume {
  position: relative;
}
.expand {
  position: absolute;
  left: 973px;
  top: 293px;
}
.sections {
  height: 120px;
  border-top: 12px solid #f4f4f4;
  border-bottom: 1px solid #c8c8c8;
  display: flex;
  align-items: flex-end;
  box-sizing: content-box;
  color: #666;
  position: relative;
}
.sections::after {
  content: '';
  position: absolute;
  left: 200px;
  bottom: 0;
  width: 60px;
  height: 12px;
  border-radius: 6px;
  background: #fb3b31;
}
.sections > * {
  margin-bottom: 42px;
}
.sections > svg + svg {
  margin-left: 66px;
}
.sections > .gem {
  margin: 0 0 35px 54px;
}
.sections > .level {
  width: 198px;
  margin: 0 68px 39px 30px;
  color: #7a4f14;
  font-family: Inter, sans-serif;
  font-weight: 700;
  transform: skewX(-7deg);
}
.sections > .fade {
  margin-left: 66px;
  width: 58px;
  overflow: hidden;
  padding-bottom: 8px;
  margin-bottom: 34px;
  -webkit-mask-image: linear-gradient(90deg, rgba(0, 0, 0, 0.65), transparent);
  mask-image: linear-gradient(90deg, rgba(0, 0, 0, 0.65), transparent);
}
.queue {
  height: 87px;
  overflow: hidden;
  padding-top: 48px;
  box-sizing: border-box;
}
.segmented {
  width: 718px;
  height: 80px;
  margin-left: 180px;
  border: 1px solid #666;
  border-radius: 12px;
  display: flex;
  color: #666;
}
.seg {
  width: 240px;
  display: flex;
  justify-content: center;
  padding-top: 26px;
  box-sizing: border-box;
}
.seg.on {
  margin: -1px 0 -1px -1px;
  border: 1px solid #c04848;
  border-radius: 12px;
  color: #d63c3c;
}
.dock {
  height: 279px;
  background: #252525;
}
.actions {
  height: 150px;
  display: flex;
  color: #d2d2d2;
}
.index {
  width: 248px;
  display: flex;
  flex-direction: column;
  align-items: center;
  padding-top: 12px;
}
.index > :nth-child(2) {
  margin-top: 15px;
  color: #8c8c98;
}
.index > :nth-child(3) {
  margin-top: 21px;
  color: #d8120f;
}
.action {
  width: 208px;
  display: flex;
  flex-direction: column;
  align-items: center;
  padding-top: 21px;
}
.action > :last-child {
  margin-top: 4px;
}
.system {
  height: 129px;
  display: flex;
  align-items: flex-start;
  justify-content: center;
  gap: 180px;
  padding-top: 39px;
  box-sizing: border-box;
}
.system > :first-child {
  margin-top: 2px;
}
</style>
